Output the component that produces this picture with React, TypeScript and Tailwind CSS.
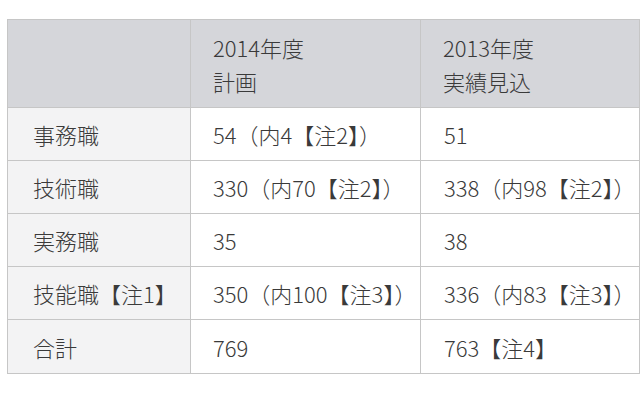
import React from "react";

const rows: [string, string, string][] = [
  ["事務職", "54（内4【注2】）", "51"],
  ["技術職", "330（内70【注2】）", "338（内98【注2】）"],
  ["実務職", "35", "38"],
  ["技能職【注1】", "350（内100【注3】）", "336（内83【注3】）"],
  ["合計", "769", "763【注4】"],
];

export default function App() {
  return (
    <div
      className="w-[640px] h-[400px] bg-white pt-[19px] pl-[7px] text-[#3a3a3a]"
      style={{ fontFamily: '"Noto Sans CJK JP", "Noto Sans", sans-serif' }}
    >
      <table className="border-collapse table-fixed w-[632px] text-[22px] leading-[34px] font-light">
        <colgroup>
          <col className="w-[183px]" />
          <col className="w-[230px]" />
          <col className="w-[219px]" />
        </colgroup>
        <thead>
          <tr className="h-[88px] bg-[#d5d6da]">
            <th className="border border-[#c6c6c6] p-0"></th>
            <th className="border border-[#c6c6c6] px-[22px] text-left font-light align-middle">
              2014年度
              <br />
              計画
            </th>
            <th className="border border-[#c6c6c6] px-[22px] text-left font-light align-middle">
              2013年度
              <br />
              実績見込
            </th>
          </tr>
        </thead>
        <tbody>
          {rows.map((r, i) => (
            <tr key={i} className={i === 4 ? "h-[54px]" : "h-[53px]"}>
              <td className="border border-[#c6c6c6] bg-[#f3f3f4] px-[25px] align-middle whitespace-nowrap">
                {r[0]}
              </td>
              <td className="border border-[#c6c6c6] bg-white px-[22px] align-middle whitespace-nowrap">
                {r[1]}
              </td>
              <td className="border border-[#c6c6c6] bg-white px-[23px] align-middle whitespace-nowrap">
                {r[2]}
              </td>
            </tr>
          ))}
        </tbody>
      </table>
    </div>
  );
}
